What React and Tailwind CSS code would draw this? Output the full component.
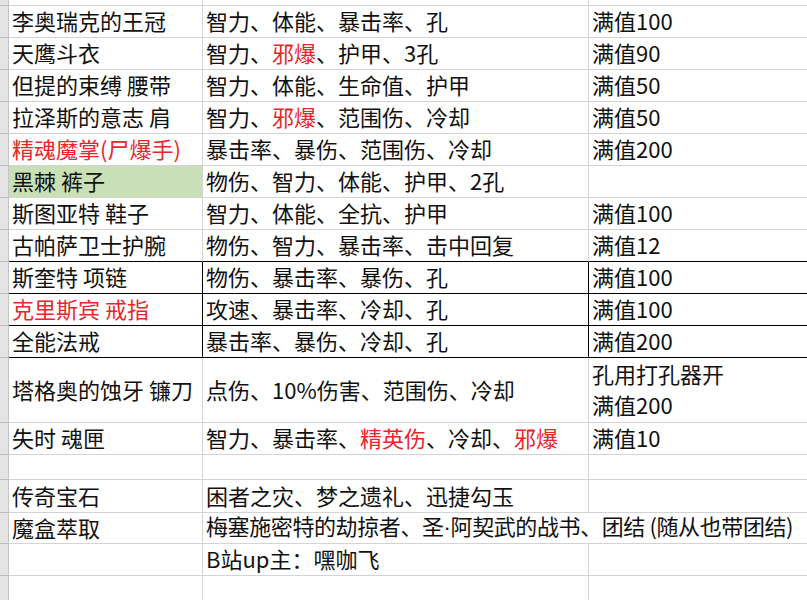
import React from 'react';

const R = ({ children }) => <span className="text-[#e8262b]">{children}</span>;

const rows = [
  { h: 'h-[6px]' },
  { h: 'h-[32px]', a: '李奥瑞克的王冠', b: '智力、体能、暴击率、孔', c: '满值100' },
  { h: 'h-[32px]', a: '天鹰斗衣', b: <>智力、<R>邪爆</R>、护甲、3孔</>, c: '满值90' },
  { h: 'h-[32px]', a: '但提的束缚 腰带', b: '智力、体能、生命值、护甲', c: '满值50' },
  { h: 'h-[32px]', a: '拉泽斯的意志 肩', b: <>智力、<R>邪爆</R>、范围伤、冷却</>, c: '满值50' },
  { h: 'h-[32px]', a: <R>精魂魔掌(尸爆手)</R>, b: '暴击率、暴伤、范围伤、冷却', c: '满值200' },
  { h: 'h-[32px]', a: '黑棘 裤子', b: '物伤、智力、体能、护甲、2孔', green: true },
  { h: 'h-[32px]', a: '斯图亚特 鞋子', b: '智力、体能、全抗、护甲', c: '满值100' },
  { h: 'h-[32px]', a: '古帕萨卫士护腕', b: '物伤、智力、暴击率、击中回复', c: '满值12', darkB: true },
  { h: 'h-[32px]', a: '斯奎特 项链', b: '物伤、暴击率、暴伤、孔', c: '满值100', darkB: true, darkR: true },
  { h: 'h-[32px]', a: <R>克里斯宾 戒指</R>, b: '攻速、暴击率、冷却、孔', c: '满值100', darkB: true, darkR: true },
  { h: 'h-[32px]', a: '全能法戒', b: '暴击率、暴伤、冷却、孔', c: '满值200', darkB: true, darkR: true },
  {
    h: 'h-[65px]',
    a: '塔格奥的蚀牙 镰刀',
    b: '点伤、10%伤害、范围伤、冷却',
    c: (
      <div className="flex flex-col leading-[31px]">
        <span>孔用打孔器开</span>
        <span>满值200</span>
      </div>
    ),
  },
  { h: 'h-[32px]', a: '失时 魂匣', b: <>智力、暴击率、<R>精英伤</R>、冷却、<R>邪爆</R></>, c: '满值10' },
  { h: 'h-[25px]' },
  { h: 'h-[33px]', a: '传奇宝石', b: '困者之灾、梦之遗礼、迅捷勾玉' },
  {
    h: 'h-[31px]',
    a: '魔盒萃取',
    b: (
      <span className="tracking-[-0.4px]">
        梅塞施密特的劫掠者、圣<span style={{ fontFamily: '"Liberation Sans", sans-serif' }}>·</span>阿契武的战书、团结 (随从也带团结)
      </span>
    ),
    span: true,
  },
  { h: 'h-[32px]', b: 'B站up主：嘿咖飞' },
  { h: 'h-[32px]' },
];

const Row = ({ row }) => {
  const bottom = row.darkB ? 'border-b-black' : 'border-b-[#d4d4d4]';
  const right = row.darkR ? 'border-r-black' : 'border-r-[#d4d4d4]';
  return (
    <div className={`flex ${row.h}`}>
      {/* row header strip */}
      <div className="w-[9px] shrink-0 bg-[#e4e4e4] border-r border-b border-r-[#c4c4c4] border-b-[#bcbcbc]" />
      <div
        className={`w-[194px] shrink-0 flex items-center pl-[3px] pb-[3px] whitespace-nowrap border-r border-b ${bottom} ${right} ${
          row.green ? 'bg-[#c9dfb6]' : 'bg-white'
        }`}
      >
        {row.a}
      </div>
      {row.span ? (
        <div className={`flex-1 flex items-center pl-[3px] pb-[3px] whitespace-nowrap border-b ${bottom}`}>{row.b}</div>
      ) : (
        <>
          <div className={`w-[386px] shrink-0 flex items-center pl-[3px] pb-[3px] whitespace-nowrap border-r border-b ${bottom} ${right}`}>
            {row.b}
          </div>
          <div className={`flex-1 flex items-center pl-[3px] pb-[3px] whitespace-nowrap border-b ${bottom}`}>{row.c}</div>
        </>
      )}
    </div>
  );
};

export default function App() {
  return (
    <div
      className="w-[807px] h-[600px] overflow-hidden bg-white text-[#111] text-[22px] leading-[30px]"
      style={{ fontFamily: '"Noto Sans CJK SC", "Noto Sans", sans-serif' }}
    >
      {rows.map((row, i) => (
        <Row key={i} row={row} />
      ))}
    </div>
  );
}
